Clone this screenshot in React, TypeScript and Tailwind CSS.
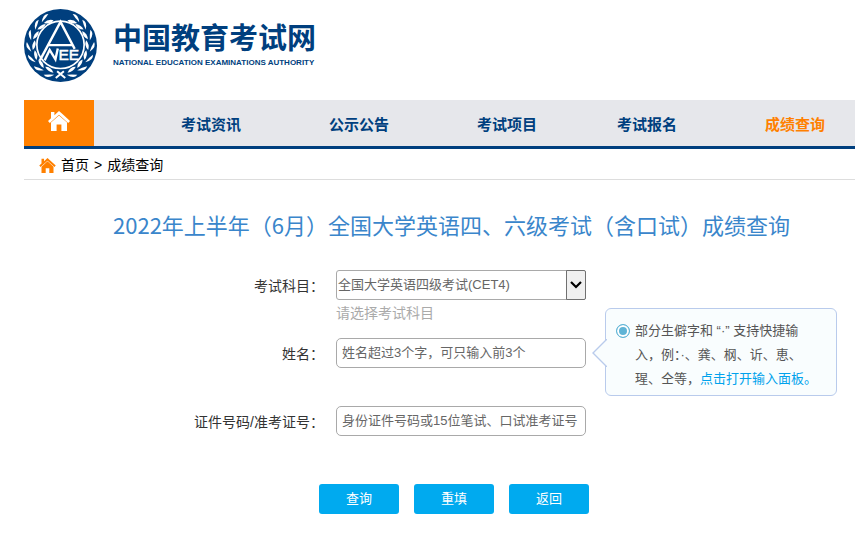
import { useState } from "react";

const navItems = [
  { label: "考试资讯", className: "mr-[88px] text-[#003f7e]" },
  { label: "公示公告", className: "mr-[88px] text-[#003f7e]" },
  { label: "考试项目", className: "mr-20 text-[#003f7e]" },
  { label: "考试报名", className: "mr-[88px] text-[#003f7e]" },
  { label: "成绩查询", className: "text-[#ff8000]" },
];

// Leaf angles, measured from the bottom of the wreath
const leaves = [16, 38, 60, 82, 104, 126, 145];

function Wreath() {
  return (
    <g>
      {leaves.map((angle) => (
        <g key={angle} transform={`rotate(${angle} 108 108)`}>
          <path d="M114 196 Q98 199 84 205 Q97 215 114 196Z" fill="#fff" />
          <path d="M110 191 Q98 176 82 181 Q93 194 110 191Z" fill="#fff" />
        </g>
      ))}
    </g>
  );
}

function Emblem() {
  return (
    <svg viewBox="0 0 216 216" className="h-[73px] w-[73px]" aria-hidden="true">
      <circle cx="108" cy="108" r="108" fill="#003f7e" />
      <Wreath />
      <g transform="translate(216 0) scale(-1 1)">
        <Wreath />
      </g>
      <path
        d="M94 204 L118 184 M122 204 L98 184"
        stroke="#fff"
        strokeWidth="6"
        fill="none"
      />
      <circle cx="108" cy="106" r="70" fill="#003f7e" stroke="#fff" strokeWidth="5" />
      <path
        d="M47 152 L108 38 L150 118 M70 107 H145"
        stroke="#fff"
        strokeWidth="7"
        fill="none"
      />
      <path d="M61 152 L76 121 L93 149 L100 117" stroke="#fff" strokeWidth="7" fill="none" />
      <text
        x="102"
        y="151"
        fill="#fff"
        fontSize="46"
        fontFamily="Liberation Sans, Arial, sans-serif"
        stroke="#fff"
        strokeWidth="1.5"
      >
        EE
      </text>
    </svg>
  );
}

function HouseIcon({ className }: { className: string }) {
  return (
    <svg viewBox="0 0 22 20" className={className} fill="currentColor" aria-hidden="true">
      <path d="M11 0 L15 3.6 L22 10 L20.2 12 L11 3.7 L1.8 12 L0 10 L3 7.2 V1 H6.4 V4.2Z" />
      <path d="M11 4.4 L19 11.6 V20 H13.4 V13.6 H8.6 V20 H3 V11.6Z" />
    </svg>
  );
}

function InputTip() {
  return (
    <div className="relative w-[232px] rounded-md border border-[#b9cbec] bg-[#f9fdfe] pt-[10px] pr-4 pb-1 pl-[10px]">
      <svg
        viewBox="0 0 15 28"
        className="absolute top-[30px] -left-[14px] h-7 w-[15px]"
        aria-hidden="true"
      >
        <path d="M15 0 L1 14 L15 28" fill="#f9fdfe" stroke="#b9cbec" strokeWidth="1.4" />
      </svg>
      <div className="flex items-start gap-[5px]">
        <input
          type="radio"
          aria-label="快捷输入"
          defaultChecked
          className="mt-[5px] h-[14px] w-[14px] shrink-0 appearance-none rounded-full border border-[#5fb4d6] bg-[#5fb4d6] shadow-[inset_0_0_0_2px_#fff]"
        />
        <p className="text-[13px] leading-6 whitespace-nowrap text-[#555]">
          部分生僻字和 “·” 支持快捷输
          <br />
          入，例：·、龚、㭎、䜣、恵、
          <br />
          瑆、仝等，
          <a href="#" className="text-[#00a2ec]">
            点击打开输入面板。
          </a>
        </p>
      </div>
    </div>
  );
}

const labelClass = "w-[324px] shrink-0 pt-px text-right text-sm leading-[30px] text-[#333]";
const fieldClass =
  "h-[30px] w-[250px] rounded-[5px] border border-[#a9a9a9] bg-white px-[5px] pb-[2px] text-[13px] text-[#555] placeholder:text-[#666] outline-none";
const buttonClass = "h-[30px] w-20 rounded-[3px] bg-[#00aaef] text-[13px] text-white";

export default function App() {
  const [subject, setSubject] = useState("CET4");
  const [name, setName] = useState("");
  const [idNumber, setIdNumber] = useState("");

  const handleReset = () => {
    setSubject("CET4");
    setName("");
    setIdNumber("");
  };

  return (
    <div className="overflow-x-hidden bg-white font-['Liberation_Sans','Noto_Sans_CJK_SC',sans-serif]">
      {/* Logo */}
      <header className="flex h-[100px] items-start gap-4 pt-[9px] pl-6">
        <Emblem />
        <div className="pt-3 text-[#003f7e]">
          <h1 className="text-[29px] leading-9 font-bold">中国教育考试网</h1>
          <p className="text-[8px] leading-3 font-bold whitespace-nowrap">
            NATIONAL EDUCATION EXAMINATIONS AUTHORITY
          </p>
        </div>
      </header>

      {/* Navigation */}
      <nav className="ml-6 flex h-[49px] border-b-3 border-[#003f7e] bg-[#e6e7eb]">
        <a
          href="#"
          aria-label="首页"
          className="flex w-[70px] shrink-0 justify-center bg-[#ff8000] pt-[11px] text-white"
        >
          <HouseIcon className="h-5 w-[22px]" />
        </a>
        <div className="flex items-center pt-1 pl-[87px] text-[15px] font-bold whitespace-nowrap">
          {navItems.map((item) => (
            <a key={item.label} href="#" className={item.className}>
              {item.label}
            </a>
          ))}
        </div>
      </nav>

      {/* Breadcrumb */}
      <div className="ml-6 flex h-[31px] items-center gap-[5px] border-b border-[#ddd] pt-[2px] pl-[15px] text-sm text-black">
        <HouseIcon className="h-[15px] w-[17px] text-[#ff8000]" />
        <a href="#">首页</a>
        <span>&gt;</span>
        <span>成绩查询</span>
      </div>

      <main className="pt-7">
        <h2 className="pl-[113px] font-['Noto_Sans_CJK_SC',sans-serif] text-[22px] leading-8 whitespace-nowrap text-[#3a86cb]">
          2022年上半年（6月）全国大学英语四、六级考试（含口试）成绩查询
        </h2>

        <form className="pt-[30px]" onSubmit={(e) => e.preventDefault()}>
          <div className="flex h-[68px] gap-3">
            <label htmlFor="subject" className={labelClass}>
              考试科目：
            </label>
            <div>
              <div className="relative w-[250px]">
                <select
                  id="subject"
                  value={subject}
                  onChange={(e) => setSubject(e.target.value)}
                  className="h-[30px] w-full appearance-none rounded-[3px] border border-[#a9a9a9] bg-white px-px text-[13px] text-[#666]"
                >
                  <option value="CET4">全国大学英语四级考试(CET4)</option>
                  <option value="CET6">全国大学英语六级考试(CET6)</option>
                </select>
                <span className="pointer-events-none absolute inset-y-0 right-0 flex w-5 items-center justify-center rounded-r-[2px] border border-[#707070] bg-[#f0f0f0]">
                  <svg viewBox="0 0 12 8" className="h-2 w-3" aria-hidden="true">
                    <path d="M1 1 L6 6 L11 1" fill="none" stroke="#000" strokeWidth="2.2" />
                  </svg>
                </span>
              </div>
              <p className="text-sm leading-[26px] text-[#aaa]">请选择考试科目</p>
            </div>
          </div>

          <div className="flex h-[68px] gap-3">
            <label htmlFor="name" className={labelClass}>
              姓名：
            </label>
            <input
              id="name"
              value={name}
              onChange={(e) => setName(e.target.value)}
              placeholder="姓名超过3个字，可只输入前3个"
              className={fieldClass}
            />
            <div className="relative">
              <div className="absolute -top-[30px] left-[7px]">
                <InputTip />
              </div>
            </div>
          </div>

          <div className="flex h-[78px] gap-3">
            <label htmlFor="idNumber" className={labelClass}>
              证件号码/准考证号：
            </label>
            <input
              id="idNumber"
              value={idNumber}
              onChange={(e) => setIdNumber(e.target.value)}
              placeholder="身份证件号码或15位笔试、口试准考证号"
              className={fieldClass}
            />
          </div>

          <div className="flex gap-[15px] pl-[319px]">
            <button type="submit" className={buttonClass}>
              查询
            </button>
            <button type="button" onClick={handleReset} className={buttonClass}>
              重填
            </button>
            <button type="button" className={buttonClass}>
              返回
            </button>
          </div>
        </form>
      </main>
    </div>
  );
}
